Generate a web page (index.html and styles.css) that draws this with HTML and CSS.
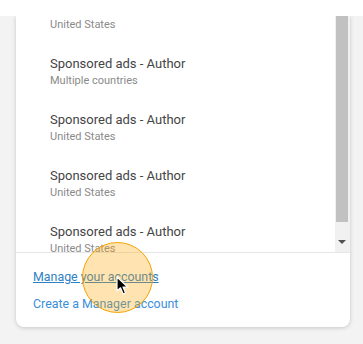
FILE: index.html
```html
<!DOCTYPE html>
<html lang="en">
<head>
  <meta charset="UTF-8" />
  <meta name="viewport" content="width=device-width, initial-scale=1" />
  <title>Accounts</title>
  <link rel="stylesheet" href="styles.css">
</head>
<body>
  <div class="topbar"></div>

  <div class="menu">
    <div class="menu-body">
      <div class="list-viewport">
        <ul class="account-list">
          <li class="account">
            <div class="account-name">Sponsored ads - Author</div>
            <div class="account-region">United States</div>
          </li>
          <li class="account">
            <div class="account-name">Sponsored ads - Author</div>
            <div class="account-region">Multiple countries</div>
          </li>
          <li class="account">
            <div class="account-name">Sponsored ads - Author</div>
            <div class="account-region">United States</div>
          </li>
          <li class="account">
            <div class="account-name">Sponsored ads - Author</div>
            <div class="account-region">United States</div>
          </li>
          <li class="account">
            <div class="account-name">Sponsored ads - Author</div>
            <div class="account-region">United States</div>
          </li>
        </ul>
      </div>
      <!-- fake scrollbar, the list is scrolled near the bottom -->
      <div class="scrollbar">
        <div class="thumb"></div>
        <div class="arrow"></div>
      </div>
    </div>

    <div class="menu-footer">
      <a href="#" class="link hovered">Manage your accounts</a>
      <a href="#" class="link">Create a Manager account</a>
    </div>

    <div class="click-spot"></div>
    <svg class="cursor" width="13" height="20" viewBox="0 0 13 20">
      <path d="M1 1 L1 15 L4.5 11.8 L7.2 18 L9.6 16.9 L7 11 L11.6 11 Z" fill="#000" stroke="#fff" stroke-width="1.2" stroke-linejoin="round"/>
    </svg>
  </div>
</body>
</html>
```

FILE: styles.css
```css
* {
  box-sizing: border-box;
}

body {
  margin: 0;
  background-color: #f3f3f3;
  font-family: Roboto, "Noto Sans", sans-serif;
  height: 344px;
  overflow: hidden;
}

.topbar {
  height: 16px;
  background-color: #ffffff;
  position: relative;
  z-index: 2;
}

.menu {
  position: relative;
  margin: 0 13px 0 16px;
  background-color: #ffffff;
  border-radius: 0 0 8px 8px;
  box-shadow: 0 1px 4px rgba(0, 0, 0, 0.18);
}

.menu-body {
  display: flex;
  height: 237px;
  border-bottom: 1px solid #e6e6e6;
}

.list-viewport {
  flex: 1;
  overflow: hidden;
}

.account-list {
  list-style: none;
  margin: -28px 0 0;
  padding: 0;
}

.account {
  height: 56px;
  padding: 12px 0 12px 34px;
}

.account-name {
  font-size: 13px;
  line-height: 16px;
  color: #454545;
}

.account-region {
  margin-top: 1px;
  font-size: 11px;
  line-height: 16px;
  color: #8a8a8a;
}

/* Scrollbar */
.scrollbar {
  width: 15px;
  background-color: #f1f1f1;
  display: flex;
  flex-direction: column;
  align-items: center;
  padding: 0 2px 0 1px;
}

.thumb {
  width: 12px;
  height: 206px;
  background-color: #c1c1c1;
}

.arrow {
  margin-top: 18px;
  width: 0;
  height: 0;
  border-left: 4px solid transparent;
  border-right: 4px solid transparent;
  border-top: 4px solid #505050;
}

.menu-footer {
  display: flex;
  flex-direction: column;
  align-items: flex-start;
  gap: 9px;
  padding: 15px 17px 14px;
}

.link {
  font-size: 12.4px;
  line-height: 18px;
  color: #3a8fd9;
  text-decoration: none;
}

.link.hovered {
  color: #2f7fc4;
  text-decoration: underline;
}

/* Click highlight + pointer */
.click-spot {
  position: absolute;
  left: 66px;
  top: 226px;
  width: 71px;
  height: 71px;
  border-radius: 50%;
  background-color: rgba(255, 165, 0, 0.3);
  border: 1.5px solid #f5a300;
}

.cursor {
  position: absolute;
  left: 100px;
  top: 260px;
}
```
